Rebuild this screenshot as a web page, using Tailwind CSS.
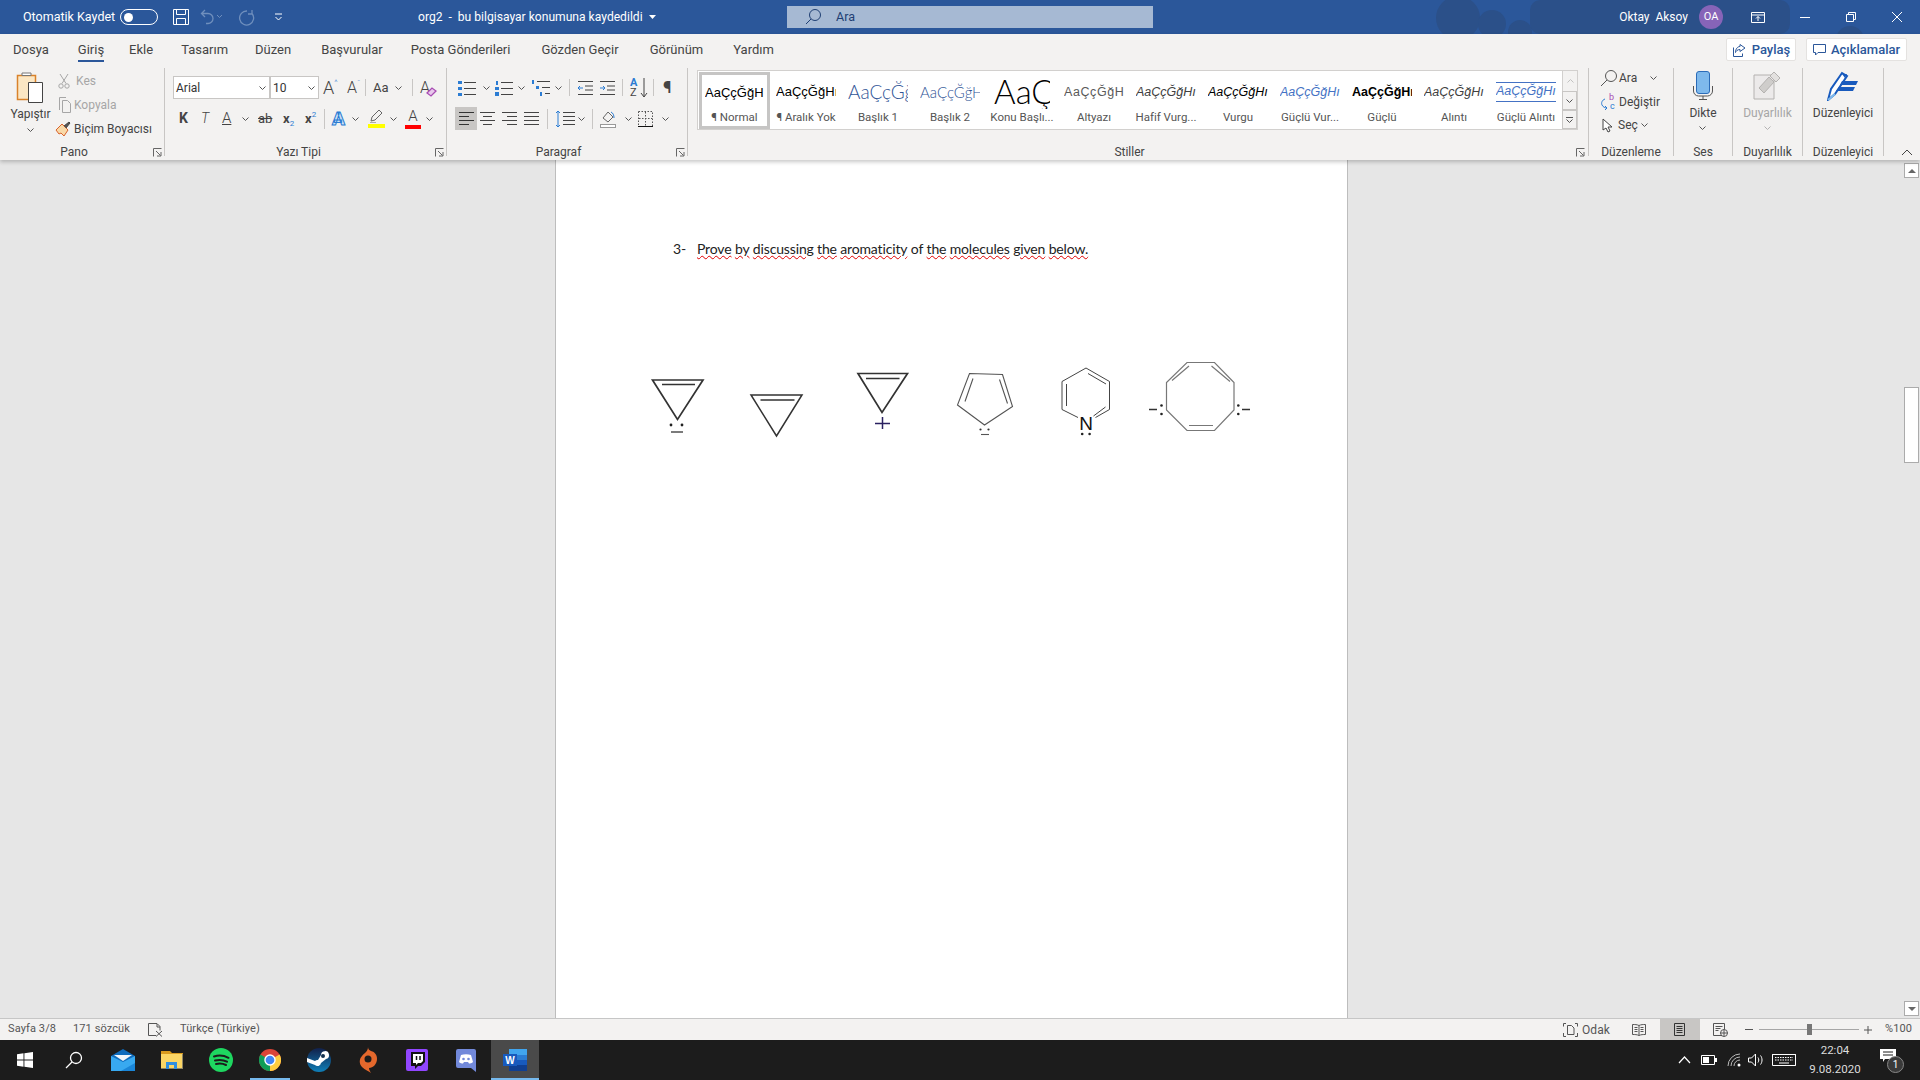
<!DOCTYPE html>
<html lang="tr">
<head>
  <meta charset="UTF-8" />
  <title>org2 - Word</title>
  <script src="https://cdn.jsdelivr.net/npm/@tailwindcss/browser@4"></script>
</head>
<body class="w-[1920px] h-[1080px] overflow-hidden flex flex-col bg-[#e6e6e6] text-[#444] text-[12px] font-['Roboto',sans-serif]">
  <svg class="hidden">
    <symbol id="ch" viewBox="0 0 7 4"><path d="M.5.5 3.5 3.5 6.5.5" fill="none" stroke="#555" stroke-width="1"/></symbol>
    <symbol id="launch" viewBox="0 0 9 9"><path d="M.5 8.5V.5h8M3 3l4.5 4.5M8 4v4H4" fill="none" stroke="#666"/></symbol>
  </svg>

  <!-- title bar -->
  <header class="relative h-[34px] shrink-0 bg-[#2b579a] text-white flex items-center text-[12.5px]">
    <svg class="absolute left-[1430px] top-0" width="490" height="34"><g fill="#2b5089"><circle cx="28" cy="18" r="22"/><circle cx="62" cy="24" r="14"/><rect x="100" y="0" width="260" height="34" rx="10"/><circle cx="90" cy="32" r="12"/><circle cx="420" cy="40" r="14"/></g></svg>
    <div class="relative flex items-center w-[787px] h-full pl-[23px]">
      <span class="w-[97px]">Otomatik Kaydet</span>
      <span class="w-[38px] h-[16px] rounded-full border border-white flex items-center pl-[3px] mr-[14px]"><span class="w-[9px] h-[9px] rounded-full bg-white"></span></span>
      <svg width="18" height="18" viewBox="0 0 18 18" class="mr-[10px]"><path d="M1.500 1.500h15v15h-15zM4.500 1.500v5h9v-5M4.500 16.500v-6h9v6" fill="none" stroke="#fff"/></svg>
      <svg width="22" height="16" viewBox="0 0 22 16" class="mr-[17px]"><path d="M5 1 1.500 4.500 5 8M2 4.500h6a4.500 4.500 0 0 1 0 10H6" fill="none" stroke="#6f8fbd" stroke-width="1.300"/><path d="m17 6 2.500 2.500L22 6" fill="none" stroke="#6f8fbd"/></svg>
      <svg width="18" height="18" viewBox="0 0 18 18" class="mr-[17px]"><path d="M13 2v4H9M13 5.500A7 7 0 1 1 8 3" fill="none" stroke="#6f8fbd" stroke-width="1.300"/></svg>
      <svg width="9" height="8" viewBox="0 0 9 8" class="mr-[135px]"><path d="M1 1h7M1.500 4 4.500 7 7.500 4" fill="none" stroke="#fff"/></svg>
      <span class="whitespace-nowrap text-[12.1px]">org2&nbsp; - &nbsp;bu bilgisayar konumuna kaydedildi</span>
      <svg width="7" height="4" viewBox="0 0 7 4" class="ml-[6px] shrink-0"><path d="M0 0h7L3.500 4z" fill="#fff"/></svg>
    </div>
    <div class="relative w-[366px] h-[22px] bg-[#a6b9d3] flex items-center pl-[16px] text-[#1f3f73]">
      <svg width="20" height="20" viewBox="0 0 20 20" class="mr-[13px]"><circle cx="12" cy="8" r="5.500" fill="none" stroke="#1f3f73"/><path d="M8 12 3 17" stroke="#1f3f73"/></svg>
      <span>Ara</span>
    </div>
    <div class="relative ml-auto flex items-center h-full">
      <span class="whitespace-nowrap mr-[11px] text-[12px]">Oktay&nbsp; Aksoy</span>
      <span class="w-[24px] h-[24px] rounded-full bg-[#8764b8] text-[11px] flex items-center justify-center mr-[28px]">OA</span>
      <svg width="14" height="11" viewBox="0 0 14 11" class="mr-[35px]"><path d="M.5.500h13v10H.500zM.5 3h13M7 9V4.500M5 6.500l2-2 2 2" fill="none" stroke="#fff"/></svg>
      <span class="w-[10px] h-px bg-white mr-[36px]"></span>
      <svg width="10" height="10" viewBox="0 0 10 10" class="mr-[36px]"><path d="M.5 2.500h7v7h-7zM2.500 2.500v-2h7v7h-2" fill="none" stroke="#fff"/></svg>
      <svg width="10" height="10" viewBox="0 0 10 10" class="mr-[18px]"><path d="m0 0 10 10M10 0 0 10" stroke="#fff"/></svg>
    </div>
  </header>

  <!-- ribbon -->
  <section class="relative z-10 h-[126px] shrink-0 bg-[#f3f2f1] shadow-[0_2px_4px_rgba(0,0,0,0.22)]">
    <nav class="h-[31px] flex items-center pl-[13px] text-[13px] text-[#444] relative">
      <span class="mr-[29px]">Dosya</span>
      <span class="relative mr-[25px] h-full flex items-center">Giriş<span class="absolute left-0 right-0 bottom-[3px] h-[2px] bg-[#2b579a]"></span></span>
      <span class="mr-[28px]">Ekle</span>
      <span class="mr-[27px]">Tasarım</span>
      <span class="mr-[30px]">Düzen</span>
      <span class="mr-[28px]">Başvurular</span>
      <span class="mr-[31px]">Posta Gönderileri</span>
      <span class="mr-[31px]">Gözden Geçir</span>
      <span class="mr-[30px]">Görünüm</span>
      <span>Yardım</span>
      <div class="ml-auto flex items-center gap-[10px] pr-[13px] text-[#2b579a] font-medium">
        <span class="w-[70px] h-[23px] bg-white border border-[#e4e2e0] rounded-[2px] flex items-center justify-center gap-[5px]">
          <svg width="15" height="14" viewBox="0 0 15 14"><path d="M8 1.500 13 5l-5 3.500V6.500C5.500 6.500 4 8 3.500 9.500 3.500 6 5.500 3.500 8 3.500z" fill="none" stroke="#2b579a"/><path d="M1.500 4.500v9h9v-3" fill="none" stroke="#2b579a"/></svg>Paylaş</span>
        <span class="w-[101px] h-[23px] bg-white border border-[#e4e2e0] rounded-[2px] flex items-center justify-center gap-[5px]">
          <svg width="13" height="12" viewBox="0 0 13 12"><path d="M.5.500h12v8H5L2.500 11V8.500h-2z" fill="none" stroke="#2b579a"/></svg>Açıklamalar</span>
      </div>
    </nav>

    <div class="flex h-[88px] mt-[3px]">
      <!-- Pano -->
      <div class="relative w-[165px] border-r border-[#c8c6c4] shrink-0 flex flex-col">
        <div class="h-[76px] flex shrink-0">
          <div class="w-[58px] flex flex-col items-center pt-[3px] pl-[3px]">
            <svg width="30" height="32" viewBox="0 0 30 32"><path d="M1.500 4.500h18v24h-18z" fill="#fbe7c4" stroke="#d9822b" stroke-width="1.500"/><path d="M6 4.500h9V2H6z" fill="#fff" stroke="#777"/><path d="M12.500 11.500h14v20h-14z" fill="#fff" stroke="#444"/></svg>
            <span class="mt-[3px] leading-[16px]">Yapıştır</span>
            <svg width="7" height="4" class="mt-[6px]"><use href="#ch"/></svg>
          </div>
          <div class="flex flex-col pt-[1px]">
            <div class="h-[24px] flex items-center gap-[6px] text-[#a6a6a6]">
              <svg width="12" height="16" viewBox="0 0 12 16"><path d="M2 1 8 10.500M10 1 4 10.500" stroke="#a6a6a6" fill="none"/><circle cx="3" cy="13" r="2.200" fill="none" stroke="#a6a6a6"/><circle cx="9" cy="13" r="2.200" fill="none" stroke="#a6a6a6"/></svg>Kes</div>
            <div class="h-[24px] flex items-center gap-[2px] -ml-[2px] text-[#a6a6a6]">
              <svg width="16" height="16" viewBox="0 0 16 16"><path d="M3.500 13V.500H10M6.500 15.500v-12h5l3 3v9z" fill="#f3f2f1" stroke="#a6a6a6"/></svg>Kopyala</div>
            <div class="h-[24px] flex items-center gap-[3px] -ml-[3px] text-[#444]">
              <svg width="16" height="16" viewBox="0 0 16 16"><path d="M1 9 7 3l6 6-4 6-3-3-2 1z" fill="#f8d9a8" stroke="#d9622b"/><path d="m9 5 5-4 1 1-4 5" fill="#555" stroke="#444"/></svg>Biçim Boyacısı</div>
          </div>
        </div>
        <div class="h-[16px] leading-[16px] text-center pr-[16px]">Pano</div>
        <svg width="9" height="9" class="absolute left-[153px] top-[80px]"><use href="#launch"/></svg>
      </div>

      <!-- Yazı Tipi -->
      <div class="relative w-[282px] border-r border-[#c8c6c4] shrink-0 flex flex-col">
        <div class="h-[76px] pl-[8px] pt-[8px] shrink-0">
          <div class="flex items-center h-[23px]">
            <div class="flex w-[146px] h-[23px] bg-white border border-[#c8c6c4] text-[#333]">
              <div class="w-[97px] border-r-2 border-[#c8c6c4] flex items-center pl-[2px]">Arial<svg width="7" height="4" class="ml-auto mr-[3px]"><use href="#ch"/></svg></div>
              <div class="flex-1 flex items-center pl-[2px]">10<svg width="7" height="4" class="ml-auto mr-[3px]"><use href="#ch"/></svg></div>
            </div>
            <span class="w-[24px] pl-[4px] text-[18px] leading-none font-light flex">A<span class="text-[8px] text-[#2b7cd3]">^</span></span>
            <span class="w-[22px] pl-[4px] text-[16px] leading-none font-light flex">A<span class="text-[8px] text-[#2b7cd3]">ˇ</span></span>
            <span class="w-px h-[17px] bg-[#c8c6c4] mr-[7px]"></span>
            <span class="w-[22px] text-[13px]">Aa</span>
            <svg width="7" height="4" class="mr-[10px]"><use href="#ch"/></svg>
            <span class="w-px h-[17px] bg-[#c8c6c4] mr-[7px]"></span>
            <span class="relative w-[18px] text-[16px] font-light leading-none">A<svg width="11" height="11" viewBox="0 0 11 11" class="absolute left-[6px] top-[7px]"><path d="m1 6 5-5 4 3-5 5z" fill="#e8c8ec" stroke="#a74cb3" stroke-width="1.300"/></svg></span>
          </div>
          <div class="flex items-center h-[23px] mt-[8px] pl-[6px] text-[14px]">
            <span class="w-[22px] font-bold text-[14px]">K</span>
            <span class="w-[21px] italic font-light text-[14px]">T</span>
            <span class="w-[14px] underline text-[15px] font-light">A</span>
            <svg width="7" height="4" class="mr-[9px] ml-[6px]"><use href="#ch"/></svg>
            <span class="w-[25px] line-through text-[13px]">ab</span>
            <span class="w-[22px] font-bold text-[13px] flex items-end">x<span class="text-[8px] font-normal text-[#2b7cd3] -mb-[2px]">2</span></span>
            <span class="w-[19px] font-bold text-[13px] flex items-start">x<span class="text-[8px] font-normal text-[#2b7cd3]">2</span></span>
            <span class="w-px h-[20px] bg-[#c8c6c4] mr-[7px]"></span>
            <span class="w-[18px] font-black text-[19px] leading-none text-[#cfe4f7] [-webkit-text-stroke:1px_#2b7cd3]">A</span>
            <svg width="7" height="4" class="ml-[2px] mr-[9px]"><use href="#ch"/></svg>
            <span class="w-[17px] h-[20px] flex flex-col items-center">
              <svg width="15" height="14" viewBox="0 0 15 14"><path d="m2 12 1-4 7-7 3 3-7 7zM1 14h6" fill="none" stroke="#666"/></svg>
              <span class="w-[17px] h-[4px] bg-[#ffff00] mt-[1px]"></span>
            </span>
            <svg width="7" height="4" class="ml-[5px] mr-[8px]"><use href="#ch"/></svg>
            <span class="w-[16px] h-[20px] flex flex-col items-center text-[15px] leading-[15px] font-light">A<span class="w-[16px] h-[4px] bg-[#ff0000] mt-[1px]"></span></span>
            <svg width="7" height="4" class="ml-[5px]"><use href="#ch"/></svg>
          </div>
        </div>
        <div class="h-[16px] leading-[16px] text-center pr-[14px]">Yazı Tipi</div>
        <svg width="9" height="9" class="absolute left-[270px] top-[80px]"><use href="#launch"/></svg>
      </div>

      <!-- Paragraf -->
      <div class="relative w-[241px] border-r border-[#c8c6c4] shrink-0 flex flex-col">
        <div class="h-[76px] pt-[8px] shrink-0">
          <div class="flex items-center h-[23px] pl-[11px]">
            <svg width="18" height="16" viewBox="0 0 18 16"><g fill="#2b7cd3"><rect y="1" width="4" height="3"/><rect y="7" width="4" height="3"/><rect y="13" width="4" height="3"/></g><path d="M6 2.500h12M6 8.500h12M6 14.500h12" stroke="#444"/></svg>
            <svg width="7" height="4" class="ml-[7px] mr-[5px]"><use href="#ch"/></svg>
            <svg width="18" height="16" viewBox="0 0 18 16"><g fill="#2b7cd3"><rect x="1" y="1" width="2" height="4"/><rect x="0" y="7" width="4" height="3"/><rect x="0" y="12" width="4" height="4"/></g><path d="M6 2.500h12M6 8.500h12M6 14.500h12" stroke="#444"/></svg>
            <svg width="7" height="4" class="ml-[5px] mr-[7px]"><use href="#ch"/></svg>
            <svg width="18" height="16" viewBox="0 0 18 16"><g fill="#2b7cd3"><rect x="0" y="0" width="2" height="4"/><rect x="4" y="6" width="3" height="3"/><rect x="8" y="12" width="2" height="4"/></g><path d="M5 1.500h13M10 7.500h8M13 13.500h5" stroke="#444"/></svg>
            <svg width="7" height="4" class="ml-[5px] mr-[7px]"><use href="#ch"/></svg>
            <span class="w-px h-[17px] bg-[#c8c6c4] mr-[8px]"></span>
            <svg width="15" height="14" viewBox="0 0 15 14" class="mr-[7px]"><path d="M0 .5h15M7 5h8M7 9h8M0 13.500h15" stroke="#444"/><path d="M5 7H0m2-2L0 7l2 2" fill="none" stroke="#2b7cd3"/></svg>
            <svg width="15" height="14" viewBox="0 0 15 14" class="mr-[7px]"><path d="M0 .5h15M7 5h8M7 9h8M0 13.500h15" stroke="#444"/><path d="M0 7h5M3 5l2 2-2 2" fill="none" stroke="#2b7cd3"/></svg>
            <span class="w-px h-[17px] bg-[#c8c6c4] mr-[7px]"></span>
            <span class="w-[10px] flex flex-col text-[11px] leading-[10px] font-bold"><span class="text-[#2b7cd3]">A</span><span class="font-normal">Z</span></span>
            <svg width="8" height="20" viewBox="0 0 8 20" class="mr-[5px]"><path d="M4 0v19M1 15l3 4 3-4" fill="none" stroke="#444"/></svg>
            <span class="w-px h-[17px] bg-[#c8c6c4] mr-[9px]"></span>
            <span class="text-[17px] font-bold leading-none">¶</span>
          </div>
          <div class="flex items-center h-[23px] mt-[8px] pl-[8px]">
            <span class="w-[22px] h-[23px] bg-[#c8c6c4] flex items-center justify-center"><svg width="15" height="13" viewBox="0 0 15 13"><path d="M0 .5h15M0 4.500h10M0 8.500h15M0 12.500h10" stroke="#333"/></svg></span>
            <svg width="15" height="13" viewBox="0 0 15 13" class="ml-[3px] mr-[7px]"><path d="M0 .5h15M3 4.500h9M0 8.500h15M3 12.500h9" stroke="#444"/></svg>
            <svg width="15" height="13" viewBox="0 0 15 13" class="mr-[7px]"><path d="M0 .5h15M5 4.500h10M0 8.500h15M5 12.500h10" stroke="#444"/></svg>
            <svg width="15" height="13" viewBox="0 0 15 13" class="mr-[8px]"><path d="M0 .5h15M0 4.500h15M0 8.500h15M0 12.500h15" stroke="#444"/></svg>
            <span class="w-px h-[20px] bg-[#c8c6c4] mr-[7px]"></span>
            <svg width="20" height="18" viewBox="0 0 20 18"><path d="M3 1v16M1 3l2-2 2 2M1 15l2 2 2-2" fill="none" stroke="#2b7cd3"/><path d="M8 2.500h12M8 6.500h12M8 10.500h12M8 14.500h12" stroke="#444"/></svg>
            <svg width="7" height="4" class="ml-[3px] mr-[7px]"><use href="#ch"/></svg>
            <span class="w-px h-[20px] bg-[#c8c6c4] mr-[7px]"></span>
            <svg width="17" height="18" viewBox="0 0 17 18"><path d="m3 8 5-6 5 5-5 5z" fill="none" stroke="#666"/><path d="M11 2c2 1 3 3 3 6" stroke="#2b7cd3" fill="none"/><rect x=".5" y="14.500" width="15" height="3" fill="#fff" stroke="#999"/></svg>
            <svg width="7" height="4" class="ml-[8px] mr-[6px]"><use href="#ch"/></svg>
            <svg width="15" height="16" viewBox="0 0 15 16"><path d="M.5.500h14v15" fill="none" stroke="#555" stroke-dasharray="1.500 1.500"/><path d="M.5.500v14M7.500 1v14M1 7.500h13" fill="none" stroke="#555" stroke-dasharray="1.500 1.500"/><path d="M0 15.500h15" stroke="#111"/></svg>
            <svg width="7" height="4" class="ml-[9px]"><use href="#ch"/></svg>
          </div>
        </div>
        <div class="h-[16px] leading-[16px] text-center pr-[17px]">Paragraf</div>
        <svg width="9" height="9" class="absolute left-[229px] top-[80px]"><use href="#launch"/></svg>
      </div>

      <!-- Stiller -->
      <div class="relative w-[901px] border-r border-[#c8c6c4] shrink-0 flex flex-col">
        <div class="h-[76px] pl-[9px] pt-[2px] shrink-0">
          <div class="flex w-[881px] h-[60px] bg-white border border-[#d2d0ce] font-['Liberation_Sans',sans-serif]">
            <div class="w-[71px] h-[57px] ml-px mt-px border-[3px] border-[#c6c5c4] flex flex-col items-center shrink-0 overflow-hidden">
              <div class="h-[35px] w-[59px] pt-[1px] flex items-center overflow-hidden whitespace-nowrap text-[13px] text-black">AaÇçĞğHı</div>
              <div class="font-['Roboto',sans-serif] text-[11.5px] text-[#555]">¶ Normal</div>
            </div>
            <div class="w-[72px] flex flex-col items-center shrink-0 pt-[3px]">
              <div class="h-[35px] w-[60px] pt-[1px] flex items-center overflow-hidden whitespace-nowrap text-[13px] text-black">AaÇçĞğHı</div>
              <div class="font-['Roboto',sans-serif] text-[11.5px] text-[#555] whitespace-nowrap">¶ Aralık Yok</div>
            </div>
            <div class="w-[72px] flex flex-col items-center shrink-0 pt-[3px]">
              <div class="h-[35px] w-[60px] pt-[1px] flex items-center overflow-hidden whitespace-nowrap text-[19px] text-[#2f5496] font-['Lato',sans-serif] font-light">AaÇçĞğHı</div>
              <div class="font-['Roboto',sans-serif] text-[11.5px] text-[#555]">Başlık 1</div>
            </div>
            <div class="w-[72px] flex flex-col items-center shrink-0 pt-[3px]">
              <div class="h-[35px] w-[60px] pt-[1px] flex items-center overflow-hidden whitespace-nowrap text-[15px] text-[#2f5496] font-['Lato',sans-serif] font-light">AaÇçĞğHı</div>
              <div class="font-['Roboto',sans-serif] text-[11.5px] text-[#555]">Başlık 2</div>
            </div>
            <div class="w-[72px] flex flex-col items-center shrink-0 pt-[3px]">
              <div class="h-[35px] w-[56px] flex items-center overflow-hidden whitespace-nowrap text-[33px] text-black font-['Lato',sans-serif] font-light">AaÇçĞğHı</div>
              <div class="font-['Roboto',sans-serif] text-[11.5px] text-[#555] whitespace-nowrap">Konu Başlı...</div>
            </div>
            <div class="w-[72px] flex flex-col items-center shrink-0 pt-[3px]">
              <div class="h-[35px] w-[60px] pt-[1px] flex items-center overflow-hidden whitespace-nowrap text-[12.5px] tracking-[0.6px] text-[#5a5a5a]">AaÇçĞğHı</div>
              <div class="font-['Roboto',sans-serif] text-[11.5px] text-[#555]">Altyazı</div>
            </div>
            <div class="w-[72px] flex flex-col items-center shrink-0 pt-[3px]">
              <div class="h-[35px] w-[60px] pt-[1px] flex items-center overflow-hidden whitespace-nowrap text-[12.5px] italic text-[#404040]">AaÇçĞğHı</div>
              <div class="font-['Roboto',sans-serif] text-[11.5px] text-[#555] whitespace-nowrap">Hafif Vurg...</div>
            </div>
            <div class="w-[72px] flex flex-col items-center shrink-0 pt-[3px]">
              <div class="h-[35px] w-[60px] pt-[1px] flex items-center overflow-hidden whitespace-nowrap text-[12.5px] italic text-black">AaÇçĞğHı</div>
              <div class="font-['Roboto',sans-serif] text-[11.5px] text-[#555]">Vurgu</div>
            </div>
            <div class="w-[72px] flex flex-col items-center shrink-0 pt-[3px]">
              <div class="h-[35px] w-[60px] pt-[1px] flex items-center overflow-hidden whitespace-nowrap text-[12.5px] italic text-[#4472c4]">AaÇçĞğHı</div>
              <div class="font-['Roboto',sans-serif] text-[11.5px] text-[#555] whitespace-nowrap">Güçlü Vur...</div>
            </div>
            <div class="w-[72px] flex flex-col items-center shrink-0 pt-[3px]">
              <div class="h-[35px] w-[60px] pt-[1px] flex items-center overflow-hidden whitespace-nowrap text-[12.5px] font-bold text-black">AaÇçĞğHı</div>
              <div class="font-['Roboto',sans-serif] text-[11.5px] text-[#555]">Güçlü</div>
            </div>
            <div class="w-[72px] flex flex-col items-center shrink-0 pt-[3px]">
              <div class="h-[35px] w-[60px] pt-[1px] flex items-center overflow-hidden whitespace-nowrap text-[12.5px] italic text-[#404040]">AaÇçĞğHı</div>
              <div class="font-['Roboto',sans-serif] text-[11.5px] text-[#555]">Alıntı</div>
            </div>
            <div class="w-[72px] flex flex-col items-center shrink-0 pt-[3px]">
              <div class="h-[35px] w-[60px] flex items-center"><div class="w-[60px] h-[20px] border-y border-[#4472c4] flex items-center overflow-hidden whitespace-nowrap text-[12.5px] italic text-[#4472c4]">AaÇçĞğHı</div></div>
              <div class="font-['Roboto',sans-serif] text-[11.5px] text-[#555] whitespace-nowrap">Güçlü Alıntı</div>
            </div>
            <div class="w-[15px] shrink-0 ml-auto flex flex-col">
              <span class="h-[20px] bg-[#f3f2f1] border-l border-[#d2d0ce] flex items-center justify-center"><svg width="7" height="4" class="rotate-180 opacity-30"><use href="#ch"/></svg></span>
              <span class="h-[19px] bg-[#f3f2f1] border border-[#c8c6c4] flex items-center justify-center"><svg width="7" height="4"><use href="#ch"/></svg></span>
              <span class="h-[19px] bg-[#f3f2f1] border border-[#c8c6c4] flex flex-col items-center justify-center gap-[1px]"><span class="w-[7px] h-px bg-[#555]"></span><svg width="7" height="4"><use href="#ch"/></svg></span>
            </div>
          </div>
        </div>
        <div class="h-[16px] leading-[16px] text-center pr-[17px]">Stiller</div>
        <svg width="9" height="9" class="absolute left-[888px] top-[80px]"><use href="#launch"/></svg>
      </div>

      <!-- Düzenleme -->
      <div class="relative w-[85px] border-r border-[#c8c6c4] shrink-0 flex flex-col">
        <div class="h-[76px] pl-[11px] shrink-0">
          <div class="h-[24px] -mt-[2px] flex items-center">
            <svg width="18" height="18" viewBox="0 0 18 18"><circle cx="11" cy="7" r="5.500" fill="none" stroke="#555"/><path d="M7 11 1 17" stroke="#555"/></svg>
            <span class="ml-[1px]">Ara</span><svg width="7" height="4" class="ml-[13px]"><use href="#ch"/></svg>
          </div>
          <div class="h-[24px] flex items-center gap-[3px]">
            <svg width="16" height="18" viewBox="0 0 16 18"><path d="M5 6C2 7 1 10 2 12s3 3 5 3M5 13l2 2-2 2" fill="none" stroke="#2b7cd3"/><text x="9" y="7" font-size="9" fill="#a74cb3">b</text><text x="10" y="16" font-size="9" fill="#2b7cd3">c</text></svg>
            <span>Değiştir</span>
          </div>
          <div class="h-[22px] flex items-center gap-[5px] pl-[2px]">
            <svg width="11" height="15" viewBox="0 0 11 15"><path d="M1 1v11l3-2 2 4 2-1-2-4h4z" fill="#fff" stroke="#444"/></svg>
            <span>Seç</span><svg width="7" height="4" class="-ml-[2px]"><use href="#ch"/></svg>
          </div>
        </div>
        <div class="h-[16px] leading-[16px] text-center">Düzenleme</div>
      </div>

      <!-- Ses -->
      <div class="relative w-[59px] border-r border-[#c8c6c4] shrink-0 flex flex-col items-center">
        <div class="h-[76px] flex flex-col items-center pt-[3px] shrink-0">
          <svg width="20" height="29" viewBox="0 0 20 29"><rect x="3.500" y=".5" width="13" height="22" rx="2.500" fill="#7eb9ec" stroke="#2b6cb8"/><path d="M.5 15v5a5 5 0 0 0 5 5h9a5 5 0 0 0 5-5v-5M10 25v3M6 28.500h8" fill="none" stroke="#555"/></svg>
          <span class="mt-[5px] leading-[16px]">Dikte</span>
          <svg width="7" height="4" class="mt-[5px]"><use href="#ch"/></svg>
        </div>
        <div class="h-[16px] leading-[16px]">Ses</div>
      </div>

      <!-- Duyarlılık -->
      <div class="relative w-[70px] border-r border-[#c8c6c4] shrink-0 flex flex-col items-center">
        <div class="h-[76px] flex flex-col items-center pt-[3px] text-[#a6a6a6] shrink-0">
          <svg width="28" height="29" viewBox="0 0 28 29"><path d="M1 4h20v24H1z" fill="#eceaea" stroke="#b4b2b0"/><path d="m6 17 10-11 5 5-10 11z" fill="#cfcdcb" stroke="#b4b2b0"/><path d="m17 5 4-4 6 6-4 4z" fill="#e3e1df" stroke="#b4b2b0"/></svg>
          <span class="mt-[5px] leading-[16px]">Duyarlılık</span>
          <svg width="7" height="4" class="mt-[5px] opacity-40"><use href="#ch"/></svg>
        </div>
        <div class="h-[16px] leading-[16px]">Duyarlılık</div>
      </div>

      <!-- Düzenleyici -->
      <div class="relative w-[81px] border-r border-[#c8c6c4] shrink-0 flex flex-col items-center">
        <div class="h-[76px] flex flex-col items-center pt-[3px] shrink-0">
          <svg width="32" height="30" viewBox="0 0 32 30"><path d="M1 29 4 18 15 2l5 3-12 18z" fill="#fff" stroke="#185abd" stroke-width="2"/><path d="M15 3h5l-2 4zM15 10h16l-2 4H13zM12 16h16l-2 4H9z" fill="#185abd"/><path d="M1 29 8 23" stroke="#7eb9ec" stroke-width="2"/></svg>
          <span class="mt-[4px] leading-[16px]">Düzenleyici</span>
        </div>
        <div class="h-[16px] leading-[16px]">Düzenleyici</div>
      </div>

      <svg width="12" height="7" viewBox="0 0 12 7" class="ml-[17px] mt-[81px]"><path d="m1 6 5-5 5 5" fill="none" stroke="#444"/></svg>
    </div>
  </section>

  <!-- document -->
  <main class="h-[858px] shrink-0 flex overflow-hidden">
    <article class="ml-[555px] w-[793px] h-full bg-white border-x border-[#bdbdbd] shrink-0 font-['Lato',sans-serif] text-black">
      <p class="mt-[79px] pl-[117px] h-[20px] leading-[20px] text-[14px] tracking-[-0.15px] text-[#222] whitespace-pre flex">
        <span class="w-[24px]">3-</span><span class="flex gap-[3.400px]">
          <span class="underline decoration-wavy decoration-[#e00000] decoration-1">Prove</span>
          <span class="underline decoration-wavy decoration-[#e00000] decoration-1">by</span>
          <span class="underline decoration-wavy decoration-[#e00000] decoration-1">discussing</span>
          <span class="underline decoration-wavy decoration-[#e00000] decoration-1">the</span>
          <span class="underline decoration-wavy decoration-[#e00000] decoration-1">aromaticity</span>
          <span>of</span>
          <span class="underline decoration-wavy decoration-[#e00000] decoration-1">the</span>
          <span class="underline decoration-wavy decoration-[#e00000] decoration-1">molecules</span>
          <span class="underline decoration-wavy decoration-[#e00000] decoration-1">given</span>
          <span class="underline decoration-wavy decoration-[#e00000] decoration-1">below.</span>
        </span>
      </p>
      <svg class="block mt-[81px]" width="791" height="110" viewBox="556 340 791 110" fill="none" stroke="#333" stroke-width="1.300">
        <path d="M652.500 380h50.500l-25.500 39.500zM662 384.500h33" stroke-width="1.700"/>
        <circle cx="671" cy="425" r="1.400" fill="#222" stroke="none"/><circle cx="682" cy="425" r="1.400" fill="#222" stroke="none"/><path d="M671 432h12"/>
        <path d="M751 395h51l-25.500 41zM760.500 400h34" stroke-width="1.500"/>
        <path d="M858 373.500h49.500l-25.500 39zM866 378.500h33.500" stroke-width="1.700"/>
        <path d="M875 423.500h15M882.500 417v12" stroke="#2a2060" stroke-width="1.500"/>
        <g stroke="#555" stroke-width="1.100">
          <path d="M969.500 373.500 1002.500 374.500 1012.500 406.500 984.500 425 957.500 405zM973 378.500 965 401.500M999.500 379.500 1007.500 403.500"/>
          <path d="M981 434.500h8"/>
        </g>
        <circle cx="980.500" cy="429.500" r="1.100" fill="#333" stroke="none"/><circle cx="988.500" cy="429.500" r="1.100" fill="#333" stroke="none"/>
        <g stroke="#444" stroke-width="1">
          <path d="M1078 417.500 1062 409.500V381.500L1086 368 1109.500 381.500V409.500L1095.500 417.500M1066.500 384V406M1088 373.500 1106 384M1093.500 416 1105.500 407"/>
        </g>
        <text x="1086" y="430" text-anchor="middle" font-family="Liberation Sans" font-size="19" fill="#111" stroke="none">N</text>
        <circle cx="1082.200" cy="434" r="1.300" fill="#222" stroke="none"/><circle cx="1089.600" cy="434" r="1.300" fill="#222" stroke="none"/>
        <g stroke="#777" stroke-width="1.200">
          <path d="M1187 362.500H1214.500L1234 382.500V410L1214.500 430.500H1187L1166.500 410V382.500zM1172 380.500 1189 366M1211.500 366 1230 381.500M1189 425.500H1213"/>
        </g>
        <path d="M1149 409.500h8M1242 409.500h8" stroke="#333"/>
        <g fill="#222" stroke="none"><circle cx="1161.500" cy="405.500" r="1.300"/><circle cx="1161.500" cy="414" r="1.300"/><circle cx="1238.300" cy="405.500" r="1.300"/><circle cx="1238.300" cy="414" r="1.300"/></g>
      </svg>
    </article>
    <aside class="ml-auto w-[17px] h-full flex flex-col items-center">
      <span class="w-[15px] h-[15px] mt-[3px] bg-white border border-[#ababab] flex items-center justify-center"><span class="w-0 h-0 border-x-[4px] border-x-transparent border-b-[4px] border-b-[#666]"></span></span>
      <span class="w-[15px] h-[76px] mt-[209px] bg-white border border-[#ababab]"></span>
      <span class="w-[15px] h-[15px] mt-auto mb-[2px] bg-white border border-[#ababab] flex items-center justify-center"><span class="w-0 h-0 border-x-[4px] border-x-transparent border-t-[4px] border-t-[#666]"></span></span>
    </aside>
  </main>

  <!-- status bar -->
  <footer class="h-[22px] shrink-0 bg-[#f3f2f1] border-t border-[#c6c6c6] flex items-center text-[11px] tracking-[0.1px] text-[#555]">
    <span class="ml-[8px] w-[65px]">Sayfa 3/8</span>
    <span class="w-[75px]">171 sözcük</span>
    <svg width="15" height="14" viewBox="0 0 15 14"><path d="M9 .5H.500v12H8M9 .5l3 3v4M9 1v3h3M8 8l6 5.500M14 8l-6 5.500" fill="none" stroke="#555"/></svg>
    <span class="ml-[17px]">Türkçe (Türkiye)</span>
    <div class="ml-auto flex items-center h-full">
      <svg width="15" height="14" viewBox="0 0 15 14" class="mr-[4px]"><path d="M3 .5H.5v3M12 .5h2.500v3M.5 10v3.500H3M14.500 10v3.500H12M4.500 11.500v-9h4l2.500 2.500v6.500z" fill="none" stroke="#555"/></svg>
      <span class="w-[50px] text-[12px]">Odak</span>
      <svg width="14" height="12" viewBox="0 0 14 12" class="mr-[14px]"><path d="M7 1.500C5 .5 3 .5.500.5v10c2.500 0 4.500 0 6.500 1 2-1 4-1 6.500-1V.5C11 .5 9 .5 7 1.500zM7 1.500v10M2.500 3.500h3M2.500 5.500h3M2.500 7.500h3M8.500 3.500h3M8.500 5.500h3M8.500 7.500h3" fill="none" stroke="#555"/></svg>
      <span class="w-[40px] h-full bg-[#c8c6c4] flex items-center justify-center"><svg width="11" height="13" viewBox="0 0 11 13"><path d="M.5.500h10v12H.5zM2.500 3.500h6M2.500 5.500h6M2.500 7.500h6M2.500 9.500h6" fill="none" stroke="#333"/></svg></span>
      <svg width="15" height="14" viewBox="0 0 15 14" class="ml-[13px] mr-[17px]"><path d="M9 12.500H.5V.5h11v6M2.500 3.500h7M2.500 5.500h5M2.500 7.500h3" fill="none" stroke="#555"/><circle cx="11" cy="10" r="3.500" fill="none" stroke="#555"/><path d="M7.500 10h7M11 6.500v7" stroke="#555"/></svg>
      <span class="w-[8px] h-px bg-[#555] mr-[6px]"></span>
      <span class="relative w-[100px] h-px bg-[#a6a6a6] mr-[5px]"><span class="absolute left-[48px] top-[-5px] w-[5px] h-[11px] bg-[#777]"></span></span>
      <svg width="8" height="8" viewBox="0 0 8 8" class="mr-[13px]"><path d="M0 4h8M4 0v8" stroke="#555"/></svg>
      <span class="mr-[8px]">%100</span>
    </div>
  </footer>

  <!-- taskbar -->
  <footer class="relative h-[40px] shrink-0 bg-[#1c1c1c] flex items-center text-white">
    <div class="w-[49px] flex justify-center"><svg width="16" height="16" viewBox="0 0 16 16" fill="#fff"><path d="M0 2.200 6.500 1.300v6.300H0zM7.400 1.200 16 0v7.600H7.400zM0 8.400h6.500v6.300L0 13.800zM7.400 8.400H16V16l-8.600-1.200z"/></svg></div>
    <div class="w-[49px] flex justify-center"><svg width="18" height="18" viewBox="0 0 18 18" fill="none" stroke="#fff" stroke-width="1.300"><circle cx="11" cy="7" r="5.500"/><path d="M7 11 1 17"/></svg></div>
    <div class="w-[49px] flex justify-center"><svg width="24" height="22" viewBox="0 0 24 22"><path d="M0 7 12 0l12 7v15H0z" fill="#0f6cbd"/><path d="M3 6h18L12 12z" fill="#f2f7fb"/><path d="M0 7 12 13 24 7v15H0z" fill="#38a9f0"/><path d="M24 22H10L24 14z" fill="#1a86d8"/></svg></div>
    <div class="w-[49px] flex justify-center"><svg width="22" height="18" viewBox="0 0 22 18"><path d="M0 0h9l2 2h11v16H0z" fill="#d99b1f"/><path d="M0 3h22v15H0z" fill="#fbd665"/><path d="M21 3h1v15H0v-1h21z" fill="#8d8467"/><path d="M5 11h11v7h-3v-4H8v4H5z" fill="#2f8fe0"/></svg></div>
    <div class="w-[49px] flex justify-center"><svg width="24" height="24" viewBox="0 0 24 24"><circle cx="12" cy="12" r="12" fill="#1ed760"/><path d="M5 8.500c5-1.500 10-1 14.500 1.300M6 12.500c4-1 8.500-.7 12 1.200M7 16c3.500-.8 7-.5 10 1" fill="none" stroke="#1c1c1c" stroke-width="2" stroke-linecap="round"/></svg></div>
    <div class="w-[49px] flex justify-center"><svg width="22" height="22" viewBox="0 0 24 24"><circle cx="12" cy="12" r="12" fill="#db4437"/><path d="M12 12 1.600 6A12 12 0 0 0 12 24z" fill="#0f9d58"/><path d="M12 12 22.400 6A12 12 0 0 1 12 24z" fill="#ffcd40"/><circle cx="12" cy="12" r="5.500" fill="#4285f4" stroke="#fff" stroke-width="1.500"/></svg></div>
    <div class="w-[49px] flex justify-center"><svg width="24" height="24" viewBox="0 0 24 24"><defs><linearGradient id="steam" x1="0" y1="0" x2="0" y2="1"><stop offset="0" stop-color="#12204a"/><stop offset="1" stop-color="#0f7fb8"/></linearGradient></defs><circle cx="12" cy="12" r="12" fill="url(#steam)"/><path d="M0 14 8 17a3.500 3.500 0 0 0 6-2l5-4a4 4 0 1 0-5-4l-3 5a4 4 0 0 0-3 1L0 10z" fill="#fff"/><circle cx="16" cy="8" r="2" fill="#12304f"/></svg></div>
    <div class="w-[49px] flex justify-center"><svg width="18" height="26" viewBox="0 0 18 26"><path d="M9 0c0 2 1 3 3 4 4 1 6 4 6 8 0 5-4 9-8 9 0 2 1 3 2 5-2-2-6-3-9-6-3-3-3-8 0-11 2-3 6-4 6-9z" fill="#e4682c"/><circle cx="9" cy="12" r="3.500" fill="#1c1c1c"/></svg></div>
    <div class="w-[49px] flex justify-center"><svg width="22" height="22" viewBox="0 0 22 22"><rect width="22" height="22" rx="2" fill="#9146ff"/><path d="M5 3h14v10l-4 4h-3l-3 3v-3H5z" fill="#111"/><path d="M7 5h10v7l-2 2h-3l-2 2v-2H7z" fill="#fff"/><path d="M10.500 7v4M14 7v4" stroke="#111" stroke-width="1.500"/></svg></div>
    <div class="w-[49px] flex justify-center"><svg width="20" height="23" viewBox="0 0 20 23"><path d="M2 0h16a2 2 0 0 1 2 2v21l-5-4H2a2 2 0 0 1-2-2V2a2 2 0 0 1 2-2z" fill="#7289da"/><path d="M5 6c3-1 7-1 10 0l2 7c-1 1-3 1.500-4 1.500l-1-1.500H8l-1 1.500c-1 0-3-.5-4-1.500z" fill="#fff"/><circle cx="7.500" cy="10" r="1.300" fill="#7289da"/><circle cx="12.500" cy="10" r="1.300" fill="#7289da"/></svg></div>
    <div class="w-[48px] ml-px h-full bg-[#4a4a4a] flex justify-center items-center"><svg width="24" height="22" viewBox="0 0 24 22"><path d="M6 0h18v22H6z" fill="#185abd"/><path d="M6 0h18v6H6z" fill="#41a5ee"/><path d="M6 6h18v5H6z" fill="#2b7cd3"/><path d="M6 16h18v6H6z" fill="#103f91"/><rect x="0" y="5" width="14" height="12" fill="#185abd"/><text x="7" y="15" text-anchor="middle" font-size="10" font-weight="700" font-family="Liberation Sans" fill="#fff">W</text></svg></div>
    <div class="ml-auto flex items-center h-full">
      <svg width="13" height="8" viewBox="0 0 13 8" class="mr-[10px]"><path d="m1 7 5.500-6L12 7" fill="none" stroke="#fff" stroke-width="1.200"/></svg>
      <svg width="16" height="10" viewBox="0 0 16 10" class="mr-[10px]"><path d="M.5.500h13v9H.5z" fill="none" stroke="#fff"/><rect x="2" y="2" width="6" height="6" fill="#fff"/><rect x="14" y="3" width="2" height="4" fill="#fff"/></svg>
      <svg width="14" height="14" viewBox="0 0 14 14" class="mr-[7px]" fill="none" stroke="#bbb"><path d="M1 13A12 12 0 0 1 13 1M4 13a9 9 0 0 1 9-9M7 13a6 6 0 0 1 6-6"/><circle cx="12" cy="12" r="1.500" fill="#fff" stroke="none"/></svg>
      <svg width="16" height="14" viewBox="0 0 16 14" class="mr-[8px]" fill="none" stroke="#fff"><path d="M.5 5v4h3l4 4V1l-4 4zM10 4.500c1 1.500 1 3.500 0 5M12.500 2.500c2 2.500 2 6.500 0 9"/></svg>
      <svg width="24" height="12" viewBox="0 0 24 12" class="mr-[10px]" fill="none" stroke="#fff"><path d="M.5.500h23v11H.5zM3 3.500h18M3 6h18" stroke-dasharray="1.500 1"/><path d="M.5.500h23v11H.5zM7 9h10"/></svg>
      <div class="w-[58px] flex flex-col items-center text-[11.5px] leading-[19px] text-[#ddd] mr-[16px]">
        <span>22:04</span>
        <span>9.08.2020</span>
      </div>
      <div class="relative w-[28px] h-[28px] mr-[12px]">
        <svg width="17" height="15" viewBox="0 0 17 15" class="absolute left-[0px] top-[3px]"><path d="M0 0h16v10H5l-2 3v-3H0z" fill="#fff"/><path d="M3 3h10M3 6h10" stroke="#1c1c1c"/></svg>
        <span class="absolute left-[7px] top-[10px] w-[17px] h-[17px] rounded-full bg-[#3a3a3a] border border-[#888] text-[10px] flex items-center justify-center">1</span>
      </div>
    </div>
    <span class="absolute left-[250px] bottom-0 w-[40px] h-[2px] bg-[#76b9ed]"></span>
    <span class="absolute left-[491px] bottom-0 w-[48px] h-[2px] bg-[#76b9ed]"></span>
  </footer>
</body>
</html>
